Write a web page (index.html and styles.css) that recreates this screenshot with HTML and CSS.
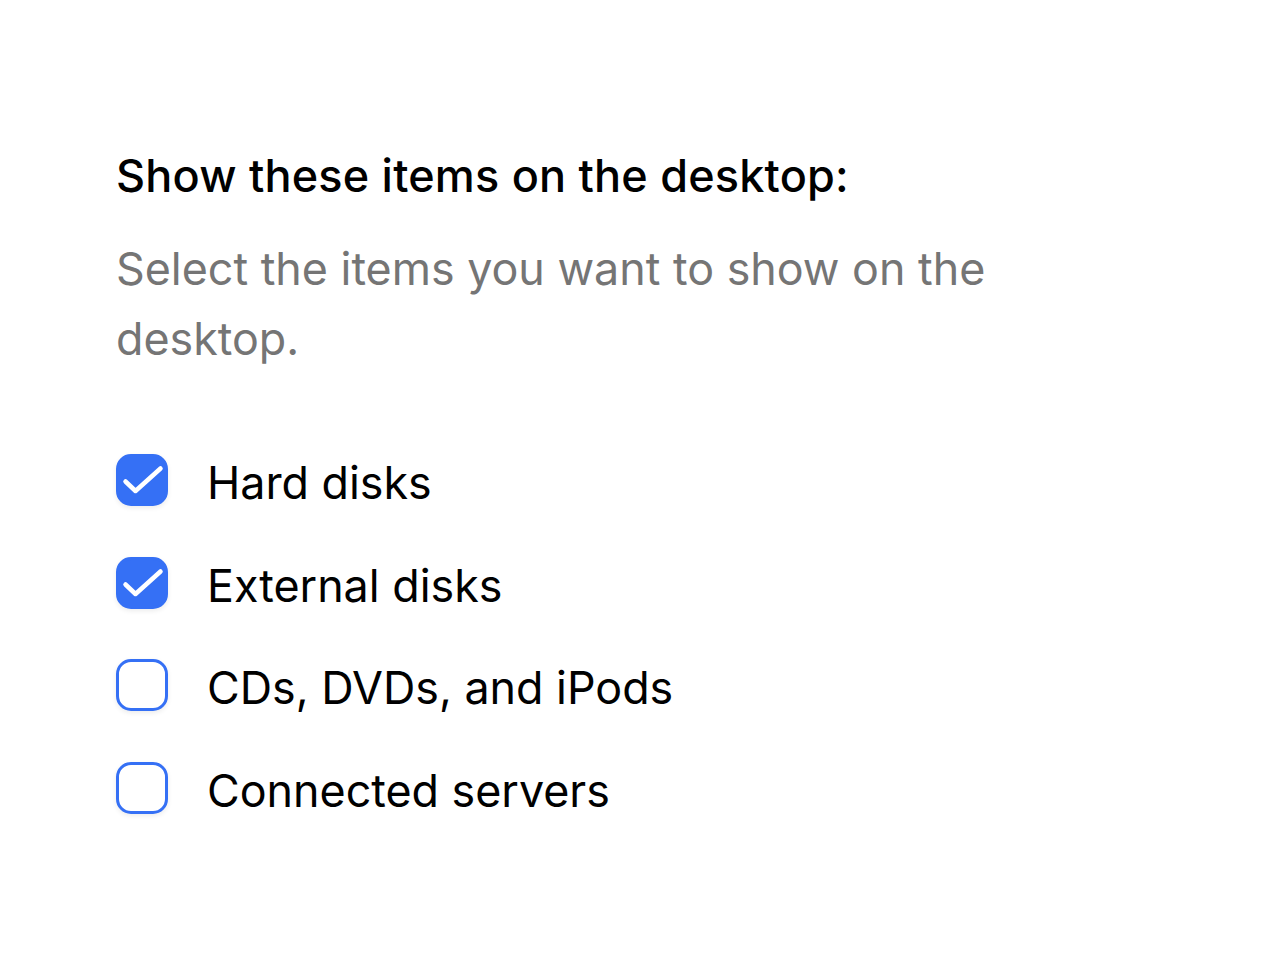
FILE: index.html
```html
<!DOCTYPE html>
<html lang="en">
<head>
    <meta charset="UTF-8">
    <meta name="viewport" content="width=device-width, initial-scale=1.0">
    <title>Desktop items</title>
    <link rel="stylesheet" href="styles.css">
</head>
<body>
    <div class="panel">
        <h2 class="title">Show these items on the desktop:</h2>
        <p class="desc">Select the items you want to show on the desktop.</p>
        <ul class="list">
            <li class="item">
                <span class="check checked">
                    <svg viewBox="0 0 52 52" width="52" height="52"><path d="M9.5 27.5 L19.5 37 L44.5 14.5" fill="none" stroke="#fff" stroke-width="4.5" stroke-linecap="round" stroke-linejoin="round"/></svg>
                </span>
                <span class="label">Hard disks</span>
            </li>
            <li class="item">
                <span class="check checked">
                    <svg viewBox="0 0 52 52" width="52" height="52"><path d="M9.5 27.5 L19.5 37 L44.5 14.5" fill="none" stroke="#fff" stroke-width="4.5" stroke-linecap="round" stroke-linejoin="round"/></svg>
                </span>
                <span class="label">External disks</span>
            </li>
            <li class="item">
                <span class="check"></span>
                <span class="label">CDs, DVDs, and iPods</span>
            </li>
            <li class="item">
                <span class="check"></span>
                <span class="label">Connected servers</span>
            </li>
        </ul>
    </div>
</body>
</html>
```

FILE: styles.css
```css
body {
    margin: 0;
    background: #fff;
    font-family: Inter, "Noto Sans", sans-serif;
    color: #000;
}
.panel {
    padding: 148px 0 0 116px;
    width: 920px;
}
.title {
    margin: 0;
    font-size: 45px;
    font-weight: 500;
    line-height: 56px;
    letter-spacing: 0.2px;
}
.desc {
    margin: 30px 0 0;
    font-size: 44.8px;
    line-height: 70px;
    color: #757575;
    width: 900px;
}
.list {
    list-style: none;
    margin: 55px 0 0;
    padding: 0;
}
.item {
    display: flex;
    align-items: center;
    gap: 39px;
    height: 102.5px;
}
.check {
    box-sizing: border-box;
    flex: none;
    width: 52px;
    height: 52px;
    border: 3px solid #3570f5;
    border-radius: 15px;
    background: #fff;
    box-shadow: 0 2px 5px rgba(0, 0, 0, 0.08);
    position: relative;
}
.check.checked {
    background: #3570f5;
}
.check svg {
    position: absolute;
    left: -3px;
    top: -3px;
}
.label {
    font-size: 44.8px;
    line-height: 52px;
    padding-top: 6px;
}
```
